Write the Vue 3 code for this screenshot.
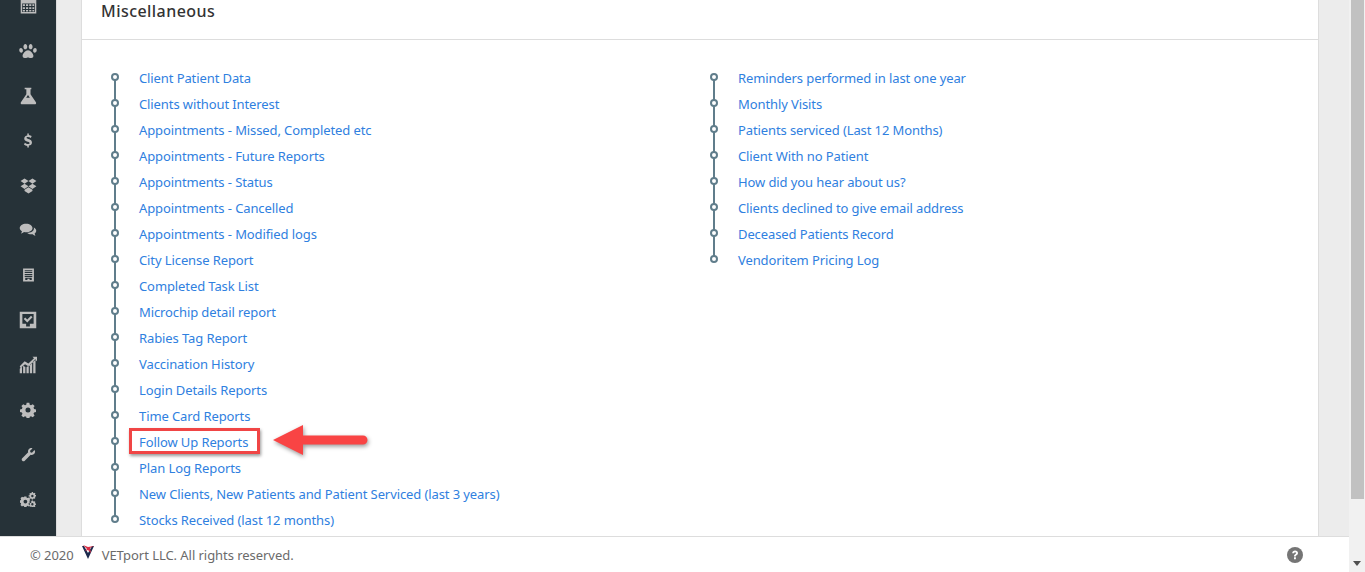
<script setup>
const icons = [
  { n: 'calendar', d: 'M1 0h22v24H1zM3 10v12h18V10zM4 11h3v2.500H4zm4.500 0h3v2.500h-3zm4.500 0h3v2.500h-3zm4.500 0H20v2.500h-2.500zM4 15h3v2.500H4zm4.500 0h3v2.500h-3zm4.500 0h3v2.500h-3zm4.500 0H20v2.500h-2.500zM4 19h3v2H4zm4.500 0h3v2h-3zm4.500 0h3v2h-3zm4.500 0H20v2h-2.500z' },
  { n: 'paw', d: 'M12 11c3 0 6.500 4 6.500 7 0 2.500-2.500 2.500-3.500 2.500-1.300 0-2-.8-3-.8s-1.700.8-3 .8c-1 0-3.500 0-3.500-2.500 0-3 3.500-7 6.500-7zM8.800 3.500c1.400 0 2.300 1.700 2.300 3.400S10.200 10 8.800 10 6.500 8.600 6.500 6.900s.9-3.400 2.300-3.400zm6.400 0c1.400 0 2.300 1.700 2.300 3.400S16.600 10 15.200 10s-2.300-1.400-2.300-3.100.9-3.400 2.300-3.400zM3.500 8.500c1.300 0 2.400 1.400 2.400 3s-.8 2.500-1.900 2.500-2.500-1.300-2.500-3 .8-2.500 2-2.500zm17 0c1.200 0 2 .9 2 2.500s-1.400 3-2.500 3-1.900-.9-1.900-2.500 1.100-3 2.400-3z' },
  { n: 'flask', d: 'M8 2h8v2h-1v6l6.500 9.500c.8 1.300 0 2.500-1.500 2.500H5c-1.500 0-2.300-1.200-1.500-2.500L10 10V4H8zm4 2v6.800L9.800 14h4.400L12 10.800z' },
  { n: 'dollar', d: 'M11 2h2.200v2.200c1.600.2 3 .8 4 1.500l-1.200 2.600c-1.300-.8-2.800-1.300-4.200-1.300-1.200 0-1.900.5-1.900 1.200 0 2.200 7.700 1.200 7.700 6.500 0 2.500-1.800 4.100-4.400 4.500V22H11v-2.300c-1.900-.2-3.500-1-4.700-2l1.300-2.500c1.300 1.100 3 1.800 4.500 1.800 1.400 0 2.200-.5 2.200-1.400 0-2.400-7.600-1.200-7.600-6.400 0-2.400 1.700-4 4.300-4.400z' },
  { n: 'dropbox', d: 'M7 3l5 3.300-5 3.400-5-3.400zM17 3l5 3.300-5 3.400-5-3.400zM2 13l5-3.300 5 3.300-5 3.300zM17 9.700L22 13l-5 3.300-5-3.300zM7 17.300l5-3.200 5 3.200v1.500L12 22l-5-3.200z' },
  { n: 'comments', d: 'M9.500 3.500C14.500 3.500 18 6 18 9.300s-3.500 5.700-8.500 5.700c-1 0-2-.1-2.800-.4C5.500 15.800 4 16.500 2.500 16.700c.7-.9 1.300-2 1.400-3.100C2 12.600 1 11 1 9.300 1 6 4.500 3.500 9.500 3.500zM19.500 8.500c2.200.9 3.500 2.600 3.500 4.500 0 1.500-.8 2.800-2.200 3.700.1 1 .6 2 1.200 2.800-1.400-.2-2.700-.9-3.800-2-.7.2-1.400.3-2.200.3-2 0-3.800-.7-5-1.800 4.800-.1 9-2.400 9-6.300 0-.4-.2-.8-.5-1.200z' },
  { n: 'receipt', d: 'M2 0h20v24H2zM5 3v2h14V3zm0 3.500v2h14v-2zM5 10v2h14v-2zm0 3.500v2h14v-2zM6 17v4h4v-2h4v2h4v-4z' },
  { n: 'check', d: 'M1 1h22v22H1zm3.500 3v13h5v3.500h5V17h5V4zm1.800 6.500l2-2 2.700 2.700 5-5 2 2-7 7z' },
  { n: 'chart', d: 'M1 23v-6l3-3v9zm4.500 0v-10l3 1.500V23zm4.500 0v-8l3-2.500V23zm4.500 0V12l3-3v14zm4.500 0V7l3-3v19zM1 13.500l6.500-6.500 5 3L20 3l-2-2h6v6l-2-2-9 9-5-3-6 5z' },
  { n: 'cog', d: 'M10 1h4l.6 3c.7.2 1.300.5 1.900.9l2.600-1.700 2.800 2.800-1.700 2.600c.4.600.7 1.200.9 1.900l3 .6v4l-3 .6c-.2.7-.5 1.300-.9 1.900l1.700 2.600-2.800 2.800-2.600-1.700c-.6.4-1.200.7-1.900.9l-.6 3h-4l-.6-3c-.7-.2-1.300-.5-1.900-.9l-2.600 1.700-2.800-2.800 1.700-2.600c-.4-.6-.7-1.200-.9-1.900l-3-.6v-4l3-.6c.2-.7.5-1.300.9-1.900L2.100 6l2.800-2.800 2.600 1.700c.6-.4 1.200-.7 1.900-.9zM12 8.200a3.800 3.800 0 1 0 0 7.600 3.800 3.800 0 0 0 0-7.600z' },
  { n: 'wrench', d: 'M22.500 6.500c.6 3.500-2.800 7.400-7 6L6 22c-1.200 1.200-2.800 1.200-4 0s-1.200-2.800 0-4l9.500-9.500c-1.300-4.200 2.500-7.600 6-7 .7.100.8.800.4 1.200L14.500 6l.5 2.500 2.500.5 3.300-3.400c.4-.4 1.600-.3 1.700.9z' },
  { n: 'cogs', d: 'M6 7h3.500l.4 2 1.500.7 1.700-1 2.400 2.400-1 1.700.7 1.500 2 .4V17l-2 .4-.7 1.500 1 1.700-2.400 2.400-1.700-1-1.500.7-.4 2H6l-.4-2-1.500-.7-1.700 1L0 20.600l1-1.700-.6-1.500-2-.4v-3.500l2-.4.6-1.500-1-1.700 2.400-2.400 1.700 1 1.500-.7zM7.800 12.300a3 3 0 1 0 0 6 3 3 0 0 0 0-6zM18 0h2l.3 1.400 1 .4 1.200-.7 1.400 1.400-.7 1.200.4 1 1.400.3v2L23.600 7.300l-.4 1 .7 1.200-1.400 1.400-1.200-.7-1 .4L20 12h-2l-.3-1.400-1-.4-1.200.7-1.400-1.400.7-1.200-.4-1L13 7.300v-2l1.400-.3.4-1-.7-1.200 1.400-1.400 1.200.7 1-.4zM19 4.400a1.900 1.900 0 1 0 0 3.800 1.900 1.900 0 0 0 0-3.800zM18 13.500h2l.3 1.400 1 .4 1.200-.7 1.400 1.400-.7 1.200.4 1 1.400.3v2l-1.400.3-.4 1 .7 1.200-1.400 1.400-1.200-.7-1 .4L20 25h-2l-.3-1.400-1-.4-1.200.7-1.400-1.400.7-1.200-.4-1-1.400-.3v-2l1.400-.3.4-1-.7-1.200 1.400-1.400 1.200.7 1-.4zM19 17.600a1.900 1.900 0 1 0 0 3.800 1.900 1.900 0 0 0 0-3.800z' }
]
const left = [
  'Client Patient Data','Clients without Interest','Appointments - Missed, Completed etc','Appointments - Future Reports','Appointments - Status','Appointments - Cancelled','Appointments - Modified logs','City License Report','Completed Task List','Microchip detail report','Rabies Tag Report','Vaccination History','Login Details Reports','Time Card Reports','Follow Up Reports','Plan Log Reports','New Clients, New Patients and Patient Serviced (last 3 years)','Stocks Received (last 12 months)'
]
const right = [
  'Reminders performed in last one year','Monthly Visits','Patients serviced (Last 12 Months)','Client With no Patient','How did you hear about us?','Clients declined to give email address','Deceased Patients Record','Vendoritem Pricing Log'
]
</script>

<template>
  <div class="page">
    <div class="left">
      <div class="main">
        <aside class="side">
          <div v-for="i in icons" :key="i.n" class="side-item" :class="'ic-' + i.n">
            <svg viewBox="0 0 24 24" fill="currentColor" fill-rule="evenodd"><path :d="i.d" /></svg>
          </div>
        </aside>
        <section class="content">
          <div class="card">
            <header class="card-head">Miscellaneous</header>
            <div class="cols">
              <ul class="tl">
                <li v-for="t in left" :key="t" :class="{ hl: t === 'Follow Up Reports' }">
                  <a>{{ t }}</a>
                  <svg v-if="t === 'Follow Up Reports'" class="arrow" viewBox="0 0 100 40" width="100" height="40">
                    <path d="M0 20L30 5V15.500H90a4.500 4.500 0 0 1 0 9H30V35z" />
                  </svg>
                </li>
              </ul>
              <ul class="tl">
                <li v-for="t in right" :key="t"><a>{{ t }}</a></li>
              </ul>
            </div>
          </div>
        </section>
      </div>
      <footer class="foot">
        <span class="copy">© 2020</span>
        <svg class="logo" viewBox="0 0 14 14" width="14" height="14">
          <path d="M1 1h2l4 7 4-7h2L7 14z" fill="#1d2a4d" />
          <path d="M2 0l5 2 6-1-4 2 1 5-3-3-3 1 2-2z" fill="#dc2f45" />
        </svg>
        <span class="copy name">VETport LLC. All rights reserved.</span>
        <svg class="help" viewBox="0 0 16 16" width="16" height="16">
          <circle cx="8" cy="8" r="8" fill="#757575" />
          <path d="M5.200 6.200C5.300 4.600 6.500 3.600 8.100 3.600c1.600 0 2.900 1 2.900 2.400 0 1.300-.8 1.800-1.500 2.300-.5.300-.7.600-.7 1.100H7c0-1 .4-1.600 1.100-2.100.6-.4.900-.7.900-1.200 0-.5-.4-.8-.9-.8-.6 0-1 .4-1.100 1zM7 10.300h1.900v1.900H7z" fill="#fff" />
        </svg>
      </footer>
    </div>
    <div class="scroll">
      <div class="thumb"></div>
      <div class="down"></div>
    </div>
  </div>
</template>

<style>
html, body { margin: 0; overflow: hidden; }
</style>

<style scoped>
.page { display: flex; width: 1365px; height: 572px; overflow: hidden; font-family: "Noto Sans", "Lato", sans-serif; }
.left { flex: 1; min-width: 0; display: flex; flex-direction: column; }
.main { flex: 1; min-height: 0; display: flex; background: #ececec; overflow: hidden; }
.side { width: 56px; flex: none; background: #263238; color: #bdbdbd; box-shadow: 1px 0 0 #dcdcdc; overflow: hidden; }
.side-item { height: 44.900px; display: flex; align-items: center; justify-content: center; }
.side-item:first-child { margin-top: -16.450px; }
.side-item svg { width: 18px; height: 18px; display: block; }
.ic-calendar svg { width: 17px; height: 18px; margin-top: -3px; }
.ic-paw svg { width: 20px; height: 20px; }
.ic-flask svg { width: 20px; height: 20px; }
.ic-dollar svg { width: 18px; height: 17px; }
.ic-dropbox svg { width: 19px; height: 19px; }
.ic-receipt svg { width: 13px; height: 14px; }
.ic-cog svg { width: 16px; height: 16px; }
.ic-wrench svg { width: 15px; height: 15px; }
.ic-cogs svg { width: 16px; height: 15px; }
.content { flex: 1; min-width: 0; padding: 0 30px 0 25px; }
.card { background: #fff; border-left: 1px solid #ddd; border-right: 1px solid #ddd; min-height: 100%; box-sizing: border-box; }
.card-head { height: 39px; border-bottom: 1px solid #ddd; padding: 0 19px; font-size: 16px; font-weight: 500; color: #333; line-height: 23px; letter-spacing: .45px; }
.cols { display: flex; padding: 25px 0 0 29px; }
.tl { list-style: none; margin: 0; padding: 0; width: 599px; flex: none; }
.tl li { position: relative; height: 26px; line-height: 26px; padding-left: 28px; font-size: 13px; letter-spacing: -.1px; color: #2f80e0; white-space: nowrap; }
.tl li::before { content: ""; position: absolute; left: 0; top: 8px; width: 4px; height: 4px; border: 2px solid #607d8b; border-radius: 50%; background: #fff; z-index: 1; }
.tl li::after { content: ""; position: absolute; left: 3px; top: 12px; width: 2px; height: 26px; background: #607d8b; }
.tl li:last-child::after { display: none; }
.hl a { position: relative; display: inline-block; }
.hl a::before { content: ""; position: absolute; left: -10px; right: -12px; top: -1px; bottom: 1px; border: 3px solid #f04545; box-shadow: 1px 2px 3px rgba(0,0,0,.4); }
.arrow { position: absolute; left: 162px; top: -9px; overflow: visible; filter: drop-shadow(1px 2px 2px rgba(0,0,0,.4)); }
.arrow path { fill: #f94444; }
.foot { height: 36px; flex: none; background: #fff; border-top: 1px solid #ddd; box-sizing: border-box; display: flex; align-items: center; padding: 0 46px 0 30px; color: #6b6b6b; font-size: 13px; letter-spacing: -.05px; }
.logo { margin: -5px 7px 0 7px; }
.help { margin-left: auto; }
.scroll { width: 16px; flex: none; background: #f1f1f1; position: relative; }
.thumb { width: 13px; margin-left: 2px; height: 499px; background: #c1c1c1; }
.down { position: absolute; left: 4px; bottom: 6px; border-left: 4px solid transparent; border-right: 4px solid transparent; border-top: 5px solid #505050; }
</style>
